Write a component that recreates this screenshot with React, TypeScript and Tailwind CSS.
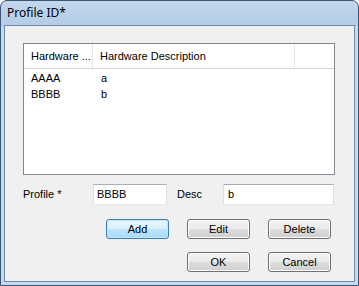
const font = { fontFamily: '"Liberation Sans", Arial, sans-serif' };

const WinButton = ({ label, focused = false }: { label: string; focused?: boolean }) => {
  return (
    <button
      className={
        focused
          ? "w-[63px] h-[20px] rounded-[3px] border border-[#3c7fb1] bg-[linear-gradient(#eaf6fd_0%,#d9f0fc_50%,#bee6fd_51%,#a7d9f5_100%)] text-[11px] text-black shadow-[inset_0_0_0_1px_#c4e5f6]"
          : "w-[63px] h-[20px] rounded-[3px] border border-[#707070] bg-[linear-gradient(#f2f2f2_0%,#ebebeb_50%,#dddddd_51%,#cfcfcf_100%)] text-[11px] text-black shadow-[inset_0_0_0_1px_#fcfcfc]"
      }
      style={font}
    >
      {label}
    </button>
  );
};

export default function App() {
  const rows = [
    { id: "AAAA", desc: "a" },
    { id: "BBBB", desc: "b" },
  ];

  return (
    <div className="w-[359px] h-[286px] flex flex-col rounded-t-[7px] border border-[#3b5675] bg-[linear-gradient(#c2d6ec_0px,#b4cce7_25px,#c6d9ee_26px,#c6d9ee_100%)] overflow-hidden">
      {/* title bar */}
      <div className="h-[24px] shrink-0 flex items-center pl-[6px]">
        <span className="text-[12px] text-black" style={{ fontFamily: '"Noto Sans", "Open Sans", sans-serif' }}>
          Profile ID*
        </span>
      </div>

      {/* client area */}
      <div className="flex-1 mx-[3px] mb-[3px] border border-[#6f8aa8] bg-[#f0f0f0] flex flex-col" style={font}>
        {/* list view */}
        <div className="ml-[18px] mt-[17px] w-[312px] h-[132px] border border-[#828790] bg-white flex flex-col">
          <div className="h-[25px] flex border-b border-[#d5d5d5] text-[11px] text-black">
            <div className="w-[69px] flex items-center pl-[7px] border-r border-[#e5e5e5]">Hardware ...</div>
            <div className="w-[202px] flex items-center pl-[7px] border-r border-[#e5e5e5]">Hardware Description</div>
            <div className="flex-1" />
          </div>
          <div className="pt-[1px]">
            {rows.map((r) => (
              <div key={r.id} className="h-[16px] flex items-center text-[11px] text-black">
                <div className="w-[69px] pl-[7px]">{r.id}</div>
                <div className="pl-[8px]">{r.desc}</div>
              </div>
            ))}
          </div>
        </div>

        {/* fields */}
        <div className="mt-[9px] flex items-center h-[21px] text-[11px] text-black">
          <span className="ml-[18px] w-[70px]">Profile *</span>
          <div className="w-[74px] h-[21px] border border-[#abadb3] border-b-[#e3e9ef] border-x-[#dbdfe6] bg-white flex items-center pl-[3px]">
            BBBB
          </div>
          <span className="ml-[10px] w-[46px]">Desc</span>
          <div className="w-[111px] h-[21px] border border-[#abadb3] border-b-[#e3e9ef] border-x-[#dbdfe6] bg-white flex items-center pl-[4px]">
            b
          </div>
        </div>

        {/* buttons */}
        <div className="mt-[14px] flex gap-[18px] ml-[101px]">
          <WinButton label="Add" focused />
          <WinButton label="Edit" />
          <WinButton label="Delete" />
        </div>
        <div className="mt-[13px] flex gap-[18px] ml-[182px]">
          <WinButton label="OK" />
          <WinButton label="Cancel" />
        </div>
      </div>
    </div>
  );
}
